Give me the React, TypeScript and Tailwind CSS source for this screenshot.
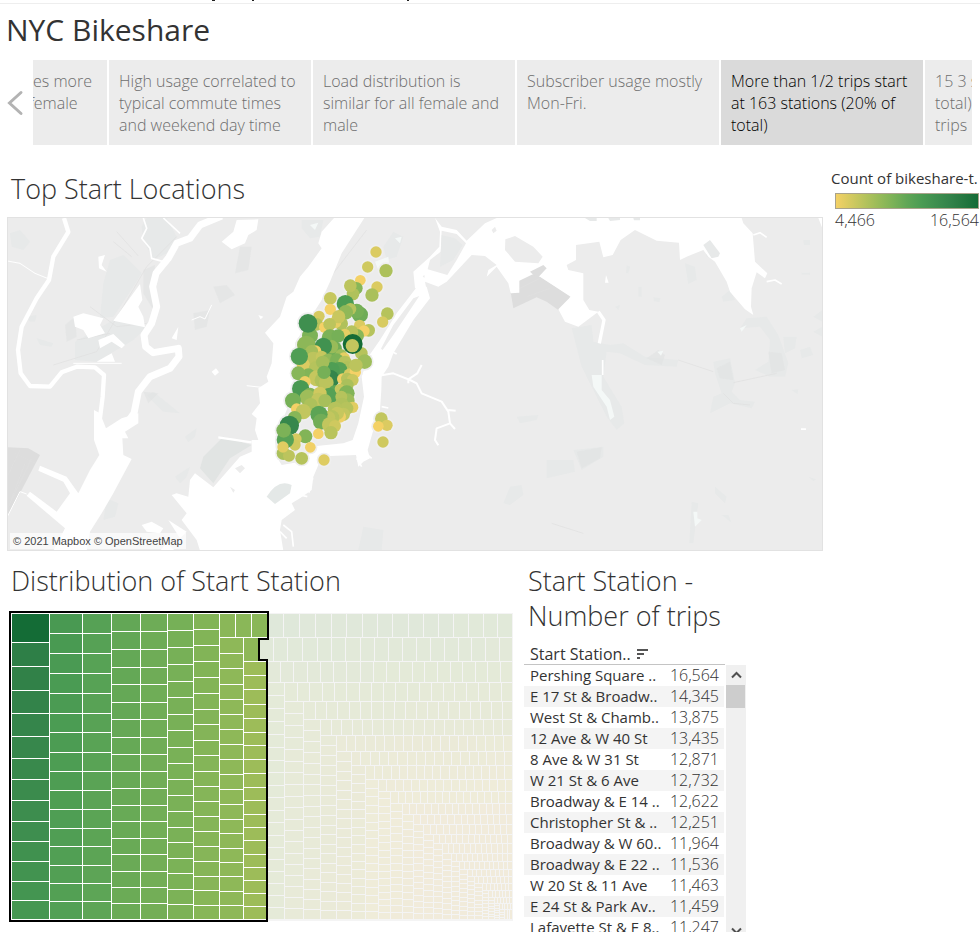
import React from "react";

type Dot = [number, number, number, number];

const PALETTE = [
  [244, 209, 102], [213, 202, 96], [182, 195, 92], [152, 187, 89], [124, 178, 87], [96, 166, 86],
  [75, 156, 83], [63, 143, 79], [51, 131, 74], [37, 119, 64], [20, 108, 54],
];

function mix(stops: number[][], t: number): string {
  const p = Math.max(0, Math.min(1, t)) * (stops.length - 1);
  const i = Math.min(stops.length - 2, Math.floor(p));
  const f = p - i;
  const c = stops[i].map((v, k) => Math.round(v + (stops[i + 1][k] - v) * f));
  return `rgb(${c[0]},${c[1]},${c[2]})`;
}

const PALE = [[223, 232, 218], [229, 234, 216], [234, 234, 216], [239, 236, 217], [241, 235, 219]];

const STORY = [
  { lines: ["es more", "female"], first: true },
  { lines: ["High usage correlated to", "typical commute times", "and weekend day time"] },
  { lines: ["Load distribution is", "similar for all female and", "male"] },
  { lines: ["Subscriber usage mostly", "Mon-Fri."] },
  { lines: ["More than 1/2 trips start", "at 163 stations (20% of", "total)"], active: true },
  { lines: ["15 3 s", "total)", "trips"] },
];

const ROWS: [string, string][] = [
  ["Pershing Square ..", "16,564"],
  ["E 17 St & Broadw..", "14,345"],
  ["West St & Chamb..", "13,875"],
  ["12 Ave & W 40 St", "13,435"],
  ["8 Ave & W 31 St", "12,871"],
  ["W 21 St & 6 Ave", "12,732"],
  ["Broadway & E 14 ..", "12,622"],
  ["Christopher St & ..", "12,251"],
  ["Broadway & W 60..", "11,964"],
  ["Broadway & E 22 ..", "11,536"],
  ["W 20 St & 11 Ave", "11,463"],
  ["E 24 St & Park Av..", "11,459"],
  ["Lafayette St & E 8..", "11,247"],
];

// x, y, radius, colour position on the palette
const DOTS: Dot[] = [
  [348, 51, 17, 0.08], [323, 96, 17, 0.12], [301, 136, 16, 0], [289, 160, 19, 0.36], [279, 177, 19, 0.22], [271, 152, 19, 0.18],
  [378, 107, 20, 0.23], [351, 156, 17, 0.08], [336, 180, 20, 0.24], [211, 190, 19, 0.15], [211, 223, 17, 0],
  [256, 206, 26, 0.6], [300, 239, 24, 0.45], [290, 228, 22, 0.42], [271, 222, 18, 0.2], [257, 232, 22, 0.33],
  [382, 236, 19, 0.2], [368, 261, 17, 0.09], [177, 244, 17, 0.1], [170, 268, 19, 0.2], [244, 266, 20, 0.22], [226, 262, 18, 0.05],
  [236, 245, 20, 0.14], [194, 277, 17, 0], [209, 268, 19, 0.18], [299, 271, 17, 0.08], [326, 286, 19, 0.2], [312, 288, 17, 0],
  [292, 302, 20, 0.35], [275, 291, 20, 0.2], [254, 298, 17, 0.05], [150, 302, 24, 0.4], [144, 265, 28, 0.7],
  [210, 308, 25, 0.4], [234, 303, 20, 0.42], [222, 342, 24, 0.44], [215, 335, 20, 0.3], [139, 330, 28, 0.34], [190, 334, 26, 0.68],
  [167, 348, 17, 0.02], [155, 350, 20, 0.26], [243, 360, 18, 0.28], [252, 370, 18, 0.05], [304, 355, 19, 0.2], [314, 380, 22, 0.28],
  [278, 327, 30, 1], [277, 332, 20, 0.16],
  [160, 374, 24, 0.18], [130, 390, 20, 0.08], [185, 365, 18, 0.15], [205, 378, 22, 0.32], [230, 375, 20, 0.4],
  [118, 364, 26, 0.58], [170, 402, 24, 0.2], [145, 420, 20, 0.38], [115, 415, 21, 0.36],
  [255, 382, 20, 0.2], [262, 400, 21, 0.22], [238, 405, 24, 0.55], [270, 420, 20, 0.1], [286, 412, 17, 0], [288, 391, 20, 0.18],
  [215, 405, 24, 0.58], [210, 432, 28, 0.78], [170, 430, 24, 0.15], [135, 440, 17, 0.02], [188, 436, 24, 0.22], [199, 443, 22, 0.18],
  [188, 382, 20, 0.26], [192, 412, 20, 0.42], [248, 432, 17, 0.02],
  [262, 432, 19, 0.2], [278, 435, 18, 0.14], [262, 450, 19, 0.24], [122, 461, 26, 0.62], [150, 478, 20, 0.38], [143, 488, 24, 0.28],
  [225, 470, 20, 0.5], [208, 484, 26, 0.55], [240, 462, 16, 0.15], [180, 475, 20, 0.12], [175, 495, 22, 0.16], [195, 497, 20, 0.25],
  [260, 475, 24, 0.38], [262, 497, 22, 0.28],
  [244, 485, 18, 0.2], [278, 517, 17, 0.06], [99, 497, 24, 0.42], [152, 510, 21, 0.23], [110, 522, 17, 0], [130, 530, 23, 0.16],
  [245, 510, 22, 0.22], [260, 520, 20, 0.2], [225, 522, 22, 0.2], [250, 538, 20, 0.16], [240, 545, 18, 0.02], [232, 535, 20, 0.15], [215, 548, 23, 0.2],
  [206, 548, 20, 0.16], [177, 538, 26, 0.52], [183, 560, 24, 0.44], [210, 570, 24, 0.16], [225, 573, 18, 0.12], [213, 593, 20, 0.19],
  [104, 549, 21, 0.36], [88, 571, 29, 0.77], [136, 604, 21, 0.38], [175, 596, 16, 0], [108, 612, 17, 0.1], [105, 630, 17, 0.12], [76, 614, 26, 0.54],
  [71, 586, 22, 0.4], [151, 637, 16, 0.01], [70, 655, 20, 0.24], [87, 662, 18, 0.18], [69, 636, 17, 0.06], [125, 670, 19, 0.2], [192, 675, 17, 0.07],
  [364, 551, 19, 0.16], [381, 571, 17, 0.08], [355, 574, 16, 0], [369, 621, 17, 0.12],
];

type Cell = { x: number; y: number; w: number; h: number; fill: string };

// Full-height columns of the largest stations: left edge, right edge, count, colour start, colour end
const COLUMNS = [
  [12, 50, 14, 0.85, 0.64], [50, 83, 16, 0.62, 0.56], [83, 112, 16, 0.55, 0.51], [112, 141, 18, 0.49, 0.46],
  [141, 168, 18, 0.45, 0.43], [168, 194, 19, 0.42, 0.4], [194, 220, 20, 0.38, 0.36],
];
// Remaining strips alternate row, column, row, column: [next edge, count]
const STRIPS = [
  [638, 19], [244, 19], [662, 19], [267, 19], [683, 19], [285, 19], [702, 19], [304, 19], [720, 19], [321, 19], [736, 19], [337, 19],
  [752, 19], [352, 18], [766, 18], [366, 18], [780, 18], [379, 17], [792, 17], [391, 18], [804, 17], [403, 16], [815, 16], [414, 15],
  [825, 15], [424, 15], [835, 14], [434, 14], [844, 14], [443, 13], [854, 13], [452, 12], [862, 12], [460, 12], [870, 11], [468, 11],
  [877, 10], [475, 10], [884, 9], [483, 9], [891, 8], [489, 9], [898, 7], [495, 8], [904, 6], [500, 7], [910, 5], [505, 4], [920, 3],
];
const RIGHT = 513;
const BOTTOM = 920;

function split(from: number, to: number, count: number, skew: number): number[] {
  const weights = Array.from({ length: count }, (_, i) => 1 + skew * (0.5 - i / Math.max(1, count - 1)));
  const total = weights.reduce((a, b) => a + b, 0);
  let at = from;
  const edges = [from];
  weights.forEach((w) => {
    at += ((to - from) * w) / total;
    edges.push(Math.round(at));
  });
  return edges;
}

function buildCells(): Cell[] {
  const cells: Cell[] = [];
  COLUMNS.forEach(([x0, x1, n, a, b], col) => {
    const edges = col === 0
      ? [614, 643, 667, 691, 714, 737, 759, 780, 801, 822, 842, 862, 882, 901, BOTTOM]
      : split(614, BOTTOM, n, 0.12);
    for (let i = 0; i < n; i++) {
      const t = col === 0 && i === 0 ? 1 : a + ((b - a) * i) / (n - 1);
      cells.push({ x: x0, y: edges[i], w: x1 - x0 - 1, h: edges[i + 1] - edges[i] - 1, fill: mix(PALETTE, t) });
    }
  });
  let left = 220;
  let top = 614;
  STRIPS.forEach(([edge, n], s) => {
    const row = s % 2 === 0;
    const edges = row ? split(left, RIGHT, n, 0.1) : split(top, BOTTOM, n, 0.1);
    for (let i = 0; i < n; i++) {
      const strong = (s === 0 && i < 3) || s === 1 || (s === 2 && i === 0) || s === 3;
      const drift = s > 5 ? (((s * 7 + (i > n / 2 ? 5 : 0)) % 5) - 2) * 0.02 : 0;
      const fill = strong ? mix(PALETTE, s === 0 ? 0.35 : s < 3 ? 0.335 : 0.285) : mix(PALE, s / 26 + (i / n) * 0.08 + drift);
      const size = edges[i + 1] - edges[i] - 1;
      cells.push(row
        ? { x: edges[i], y: top, w: size, h: edge - top - 1, fill }
        : { x: left, y: edges[i], w: edge - left - 1, h: size, fill });
    }
    if (row) top = edge;
    else left = edge;
  });
  return cells;
}

function Treemap() {
  return (
    <svg viewBox="9 611 505 312" className="block w-[505px] h-[312px]" role="img" aria-label="Distribution of start stations" shapeRendering="crispEdges">
      <path d="M268,613H513V921H268Z" fill="#f4f4f4" />
      {buildCells().map((c, i) => (
        <rect key={i} x={c.x} y={c.y} width={Math.max(1, c.w)} height={Math.max(1, c.h)} fill={c.fill} />
      ))}
      <path d="M10,612H268V639H259V660H267V921H10Z" fill="none" stroke="#000" strokeWidth="2" />
    </svg>
  );
}

function ManhattanMap() {
  return (
    <svg viewBox="8 218 814 332" preserveAspectRatio="xMidYMid slice" className="block h-[332px] w-full bg-[#ececec]" role="img" aria-label="Map of top start locations">
      <g transform="translate(0 210) scale(.33333)">
        <g fill="#e7e9e9">
          <path d="M30,70L60,60 90,95 70,120 35,110ZM440,24H500L530,80 500,130 460,150 430,90 425,50ZM330,150L370,135 425,190 400,230 340,320 300,325 310,220ZM225,395L340,330 440,350 400,390 290,455 225,450ZM440,555L460,545 540,610 490,605ZM320,865L355,880 345,920 310,930ZM525,800L570,770 560,800 540,820ZM80,320L110,315 105,335 90,335ZM110,385L160,400 155,410 120,405ZM555,680L590,655 585,680 565,697Z" />
          <path d="M905,30L970,30 960,80 930,85 905,55ZM1150,110L1180,65 1210,80 1190,140 1160,150ZM1510,880L1530,830 1565,825 1570,855 1530,885ZM1075,1020L1090,950 1150,960 1145,1020ZM1550,620L1615,615 1610,630 1560,640Z" />
          <path d="M1715,355L1775,345 1780,395 1830,405 1870,400 1935,440 2035,450 2030,470 1935,465 1860,430 1820,425 1810,500 1865,590 1873,640 1850,660 1820,620 1780,540 1745,470ZM2055,160L2085,170 2090,210 2065,222ZM2110,95L2150,95 2160,130 2120,140ZM2165,260L2190,240 2205,270 2170,275ZM2140,455L2190,445 2205,520 2195,545 2220,570 2265,575 2255,595 2190,580 2130,610 2140,560 2165,550 2145,490ZM2240,325L2300,320 2335,375 2365,460 2355,500 2310,500 2265,480 2305,455 2310,390 2280,350 2220,355ZM2350,380L2390,380 2385,415 2355,430ZM2400,420L2430,410 2440,435 2405,445ZM2440,320L2467,300V335ZM2440,365L2467,350V380ZM1720,720L1810,710 1810,740 1745,780ZM1640,750L1720,750 1725,785 1640,805ZM2145,830L2180,860 2175,880 2145,850ZM2075,875L2095,880 2080,1000H2068ZM1880,165L1890,170 1885,190 1878,190ZM1915,230H1925V260H1915ZM1845,290L1860,285 1855,300ZM1960,262L1982,265 1978,276 1962,274ZM2410,90H2430V105H2412ZM2405,188H2430V194H2405ZM2165,915L2185,915 2195,938ZM2375,540L2395,538 2392,552ZM2425,800L2448,808 2440,814Z" />
          <path d="M610,740L670,680 755,705 690,745 640,820 600,775Z" fill="#e1e4e3" />
        </g>
        <g fill="#e0e1e1">
          <path d="M22,712L85,715 120,735 65,840 22,920Z" fill="#dddddd" />
          <path d="M1620,200L1710,258 1700,295 1675,300 1640,275 1610,262 1540,295 1533,252 1555,208 1590,190Z" fill="#dddddd" />
          <path d="M1940,445L1975,420 1995,435 1985,465ZM1730,725L1805,712 1800,745 1745,775ZM2305,425L2345,430 2355,480 2315,490ZM2150,475L2190,455 2200,510 2160,505ZM640,230L680,225 705,255 660,280ZM580,310L630,300 620,350 585,360ZM195,345L225,320 230,380 200,395ZM720,110L755,110 745,180 705,190ZM430,545L475,550 445,580ZM430,180L465,165 460,300 430,250Z" opacity=".55" />
        </g>
        <g fill="none" stroke="#dfdfdf" strokeWidth="2">
          <path d="M22,900L75,760 M30,880L95,745 M22,800L60,720 M45,730L105,760 M160,465L290,425 440,170 530,80 M340,95L395,140 M350,65L415,138 M230,390L330,370 M2035,450L2140,485 M2200,518L2330,490 M1655,940L1750,970 M1650,235L1580,260 M1000,190L1100,60" />
          <path d="M2170,550L2200,580 2250,585 M1530,250L1620,205 M270,290L350,350 440,340" />
        </g>
        <g fill="none" stroke="#fff" strokeLinejoin="round">
          <path d="M192,24L205,66 160,140 147,210 110,265 65,350 54,420 62,490 90,528 150,530 185,487 230,470 285,472 312,495 308,560 298,640" strokeWidth="13" />
          <path d="M665,18L600,45 570,85 530,100 505,145 468,190 458,230 470,290 455,340 432,375 437,410 460,428 535,415 537,440 510,475 450,500 415,545 402,610 370,655" strokeWidth="21" />
          <path d="M430,24L440,55 425,85 450,115 455,145 490,155 M490,24L540,70" strokeWidth="5" />
          <path d="M22,153L60,160 105,190 147,207 M22,920L60,845 80,852 M575,330L600,320 615,327 635,285 M220,460H365 M740,527L785,532" strokeWidth="3" />
          <path d="M655,682L755,697" strokeWidth="7" />
          <path d="M1145,496L1180,490 1230,510 1250,520 1265,550 1325,575 1345,605 1350,640 1310,655 1305,690 1315,706 M1345,600L1367,602 M1225,520V508L1252,490 1265,465 M1350,640L1365,657" strokeWidth="6" />
          <path d="M1795,305L1812,330 1798,400" strokeWidth="10" />
          <path d="M1808,450V495" strokeWidth="5" />
          <path d="M2260,75L2280,68 2300,82 M2300,215L2325,210 2345,222" strokeWidth="5" />
        </g>
        <g fill="#fff">
          <path d="M282,600L300,610 318,655 365,625 415,610 415,640 375,665 385,685 367,685 370,735 395,747 340,850 305,910 270,965 260,1022H160L195,955 80,857 90,845 170,905 210,850 190,815 115,782 120,767 200,800 235,850 270,780 298,735 282,690Z" />
          <path d="M420,222L427,270 415,290 430,320 435,352 340,332ZM220,320L250,310 310,325 300,345 315,370 265,385 250,360 225,350ZM295,390L340,372 375,405 365,415 335,395 300,415ZM290,455L335,430 345,455ZM295,140L315,135 305,165 320,185 297,175ZM665,95L700,65 710,30 775,28 770,60 745,75 735,100 695,118ZM635,485L648,475 657,487 645,497ZM775,315L790,320 782,328ZM515,385L535,350 530,390Z" />
          <path d="M1002,24L965,65 955,100 965,115 925,170 900,200 880,245 860,260 840,320 795,368 820,400 815,460 800,500 805,515 775,535 780,580 755,612 770,625 765,660 775,690H755V725L720,740 640,832 585,790 570,810 565,860 530,850 515,855 560,910 545,930 590,990 600,1022H850L840,960 845,930 885,900 875,880 900,865 935,840 940,800 955,765 990,738 1068,735 1075,770 1090,755 1110,745 1103,720 1120,660 1140,600 1144,540 1145,500 1165,470 1180,430 1240,330 1290,265 1280,230 1250,232 1190,310 1140,390 1105,440 1085,500 1092,560 1075,640 1058,690 1030,700 950,708 930,720 900,755 845,765 830,740 825,690 860,600 890,500 885,400 940,310 965,270 990,215 1025,130 1093,24Z" />
          <path d="M425,945L455,935 490,955 480,970 440,965ZM505,930L560,965 540,985ZM500,1000L525,1022H480Z" />
          <path d="M1305,24L1325,50 1370,60 1400,92 1455,40 1490,24H2225L2230,40 2258,70 2265,155 2302,190 2295,205 2270,187 2255,235 2253,290 2260,315 2235,298 2190,245 2180,215 2145,155 2125,140 2110,120 2060,140 2040,150 2037,98 1970,92 1905,60 1862,90 1838,135 1810,142 1798,95 1728,105V150L1700,165 1705,180 1750,190 1750,270 1768,300 1795,305 1735,350 1695,335 1675,298 1712,260 1620,200 1600,192 1558,212V248L1532,250 1525,220 1490,170 1460,200 1465,180 1490,165 1455,138 1415,135 1340,215 1315,230 1275,215 1280,240 1245,235 1240,185 1290,140 1318,110 1320,65Z" />
          <path d="M2455,24H2467V55ZM2403,655H2418V660H2403ZM1818,195L1826,218H1815Z" />
        </g>
        <g fill="#ececec">
          <path d="M1325,62L1370,72 1398,100 1370,150 1342,195 1283,178 1290,150 1322,125Z" />
          <path d="M1325,75L1365,85 1388,105 1360,150 1320,170Z" fill="#e7e9e9" />
          <path d="M1516,88L1545,78 1600,110 1628,140 1615,160 1545,155 1515,120ZM1475,60L1485,50 1490,62 1480,70ZM1268,198L1274,196 1273,204ZM1258,258L1180,375 1148,420 1143,416 1180,345 1240,265ZM690,830L705,840 700,848ZM705,775L725,765 735,775 720,790Z" />
          <path d="M1590,185L1630,165 1640,175 1612,205Z" fill="#dddddd" />
          <path d="M800,860Q835,805 875,825L870,850 825,882Z" fill="#e4e8e7" />
          <path d="M1825,24H1860V30L1830,33ZM1755,24L1770,33H1790V24ZM1900,24H1920V31H1902ZM2110,105L2130,90 2160,130 2155,140 2135,145Z" fill="#e7e9e9" />
        </g>
        <path d="M1775,495H1805V540L1830,570 1843,620 1830,630 1820,590 1780,530ZM2080,905H2092V925L2105,930 2085,950ZM2220,355L2240,345 2225,365ZM1972,425L1990,422 1983,437ZM1125,155L1165,140 1168,165 1135,180ZM1185,85L1205,80 1200,100ZM930,45L955,38 945,60Z" fill="#f4f8f7" />
        <path d="M915,800L940,808 M910,820L935,828 M905,840L930,846 M900,855L922,860 M840,965L860,985 M850,945L875,965 880,1010 M1070,745L1085,770 M1085,720L1115,745 M1145,590L1165,594 M1165,420L1190,432" fill="none" stroke="#fff" strokeWidth="5" />
        <g transform="translate(780 75)">
          {DOTS.map(([x, y, r], i) => <circle key={i} cx={x} cy={y} r={r + 5} fill="#efefef" />)}
          {DOTS.map(([x, y, r, t], i) => <circle key={i} cx={x} cy={y} r={r} fill={mix(PALETTE, t)} />)}
        </g>
      </g>
    </svg>
  );
}

export default function App() {
  return (
    <div className="h-screen overflow-hidden bg-white font-['Open_Sans','Noto_Sans',sans-serif] text-[#333]">
      <div className="h-1 border-b border-[#eee]">
        <svg className="block h-[3px] w-[500px]" viewBox="0 0 500 3" aria-hidden="true">
          <path d="M212,0h3M252,0h2M407,0h2" stroke="#222" strokeWidth="2" />
        </svg>
      </div>
      <header className="flex h-14 items-center px-1.5 pb-1">
        <h1 className="text-[30px] leading-9">NYC Bikeshare</h1>
      </header>

      <nav className="flex pr-2" aria-label="Story points">
        <button type="button" aria-label="Previous" className="flex w-[33px] shrink-0 items-center pl-[7px]">
          <svg width="18" height="26" viewBox="0 0 18 26" fill="none" stroke="#b3b3b3" strokeWidth="3" strokeLinecap="round"><path d="M14 2.500L2.500 13l11.500 10.500" /></svg>
        </button>
        <div className="flex min-w-0 flex-1 gap-0.5 overflow-hidden">
          {STORY.map((s, i) => (
            <button
              key={i}
              type="button"
              className={
                "flex h-[85px] shrink-0 flex-col overflow-hidden whitespace-nowrap pt-2.5 text-left text-[16px] leading-[22px] font-light " +
                (s.first ? "w-[74px] " : "w-[202px] px-2.5 ") +
                (s.active ? "bg-[#dadada] text-black" : "bg-[#ececec] text-[#6e6e6e]")
              }
            >
              {s.lines.map((l) => <span key={l} className={l === "female" ? "-ml-1" : ""}>{l}</span>)}
            </button>
          ))}
        </div>
      </nav>

      <div className="flex pt-6">
        <section className="min-w-0 flex-1 pl-[7px]">
          <h2 className="h-12 pl-1 text-[27px] leading-10 font-light">Top Start Locations</h2>
          <div className="relative border border-[#e2e2e2]">
            <ManhattanMap />
            <p className="absolute bottom-px left-0.5 bg-white/70 px-[3px] font-['Liberation_Sans',Arial,sans-serif] text-[11px] leading-4 text-[#444]">
              <a href="#mapbox">© 2021 Mapbox</a> <a href="#osm">© OpenStreetMap</a>
            </p>
          </div>
        </section>
        <aside className="w-[157px] shrink-0 pr-px pl-2">
          <p className="whitespace-nowrap pb-1.5 text-[15px] leading-[18px]">Count of bikeshare-t.</p>
          <div className="ml-1 h-4 border border-[#a9a38b] bg-[linear-gradient(90deg,#f4d166,#d5ca60,#b6c35c,#98bb59,#7cb257,#60a656,#4b9c53,#3f8f4f,#33834a,#257740,#146c36)]" />
          <div className="ml-1 flex justify-between text-[16px] leading-[22px] font-light"><span>4,466</span><span>16,564</span></div>
        </aside>
      </div>

      <div className="flex gap-2.5 pt-3">
        <section className="pl-[9px]">
          <h2 className="h-12 pl-0.5 text-[27px] leading-[35px] font-light">Distribution of Start Station</h2>
          <Treemap />
        </section>
        <section className="w-[222px]">
          <h2 className="h-20 whitespace-nowrap pl-1 text-[27px] leading-[35px] font-light">Start Station -<br />Number of trips</h2>
          <div className="flex h-[22px] w-[201px] items-center gap-1.5 border-b border-[#c4c4c4] pl-1.5 text-[16px]">
            Start Station..
            <svg width="11" height="10" viewBox="0 0 11 10" fill="#555" aria-hidden="true"><path d="M0 0h11v2H0zM0 4h7v2H0zM0 8h3v2H0z" /></svg>
          </div>
          <div className="flex h-[274px] gap-0.5 overflow-hidden">
            <table className="h-fit w-[200px] table-fixed border-collapse text-[15px] leading-[21px]">
              <tbody>
                {ROWS.map(([name, n]) => (
                  <tr key={name} className="h-[21px] even:bg-[#f4f4f4]">
                    <th scope="row" className="w-[144px] whitespace-nowrap p-0 pl-1.5 text-left font-medium">{name}</th>
                    <td className="p-0 pr-[5px] text-right text-[16px] font-light">{n}</td>
                  </tr>
                ))}
              </tbody>
            </table>
            <div className="flex w-5 flex-col items-center bg-[#f0f0f0]">
              <button type="button" aria-label="Scroll up" className="flex h-5 items-center"><svg width="11" height="8" viewBox="0 0 11 8" fill="none" stroke="#505050" strokeWidth="2"><path d="M1 6.500L5.500 2 10 6.500" /></svg></button>
              <div className="h-[23px] w-full border-r border-[#f0f0f0] bg-[#cdcdcd]" />
              <button type="button" aria-label="Scroll down" className="mt-auto flex h-4 items-center"><svg width="11" height="8" viewBox="0 0 11 8" fill="none" stroke="#505050" strokeWidth="2"><path d="M1 1.500L5.500 6 10 1.500" /></svg></button>
            </div>
          </div>
        </section>
      </div>
    </div>
  );
}
